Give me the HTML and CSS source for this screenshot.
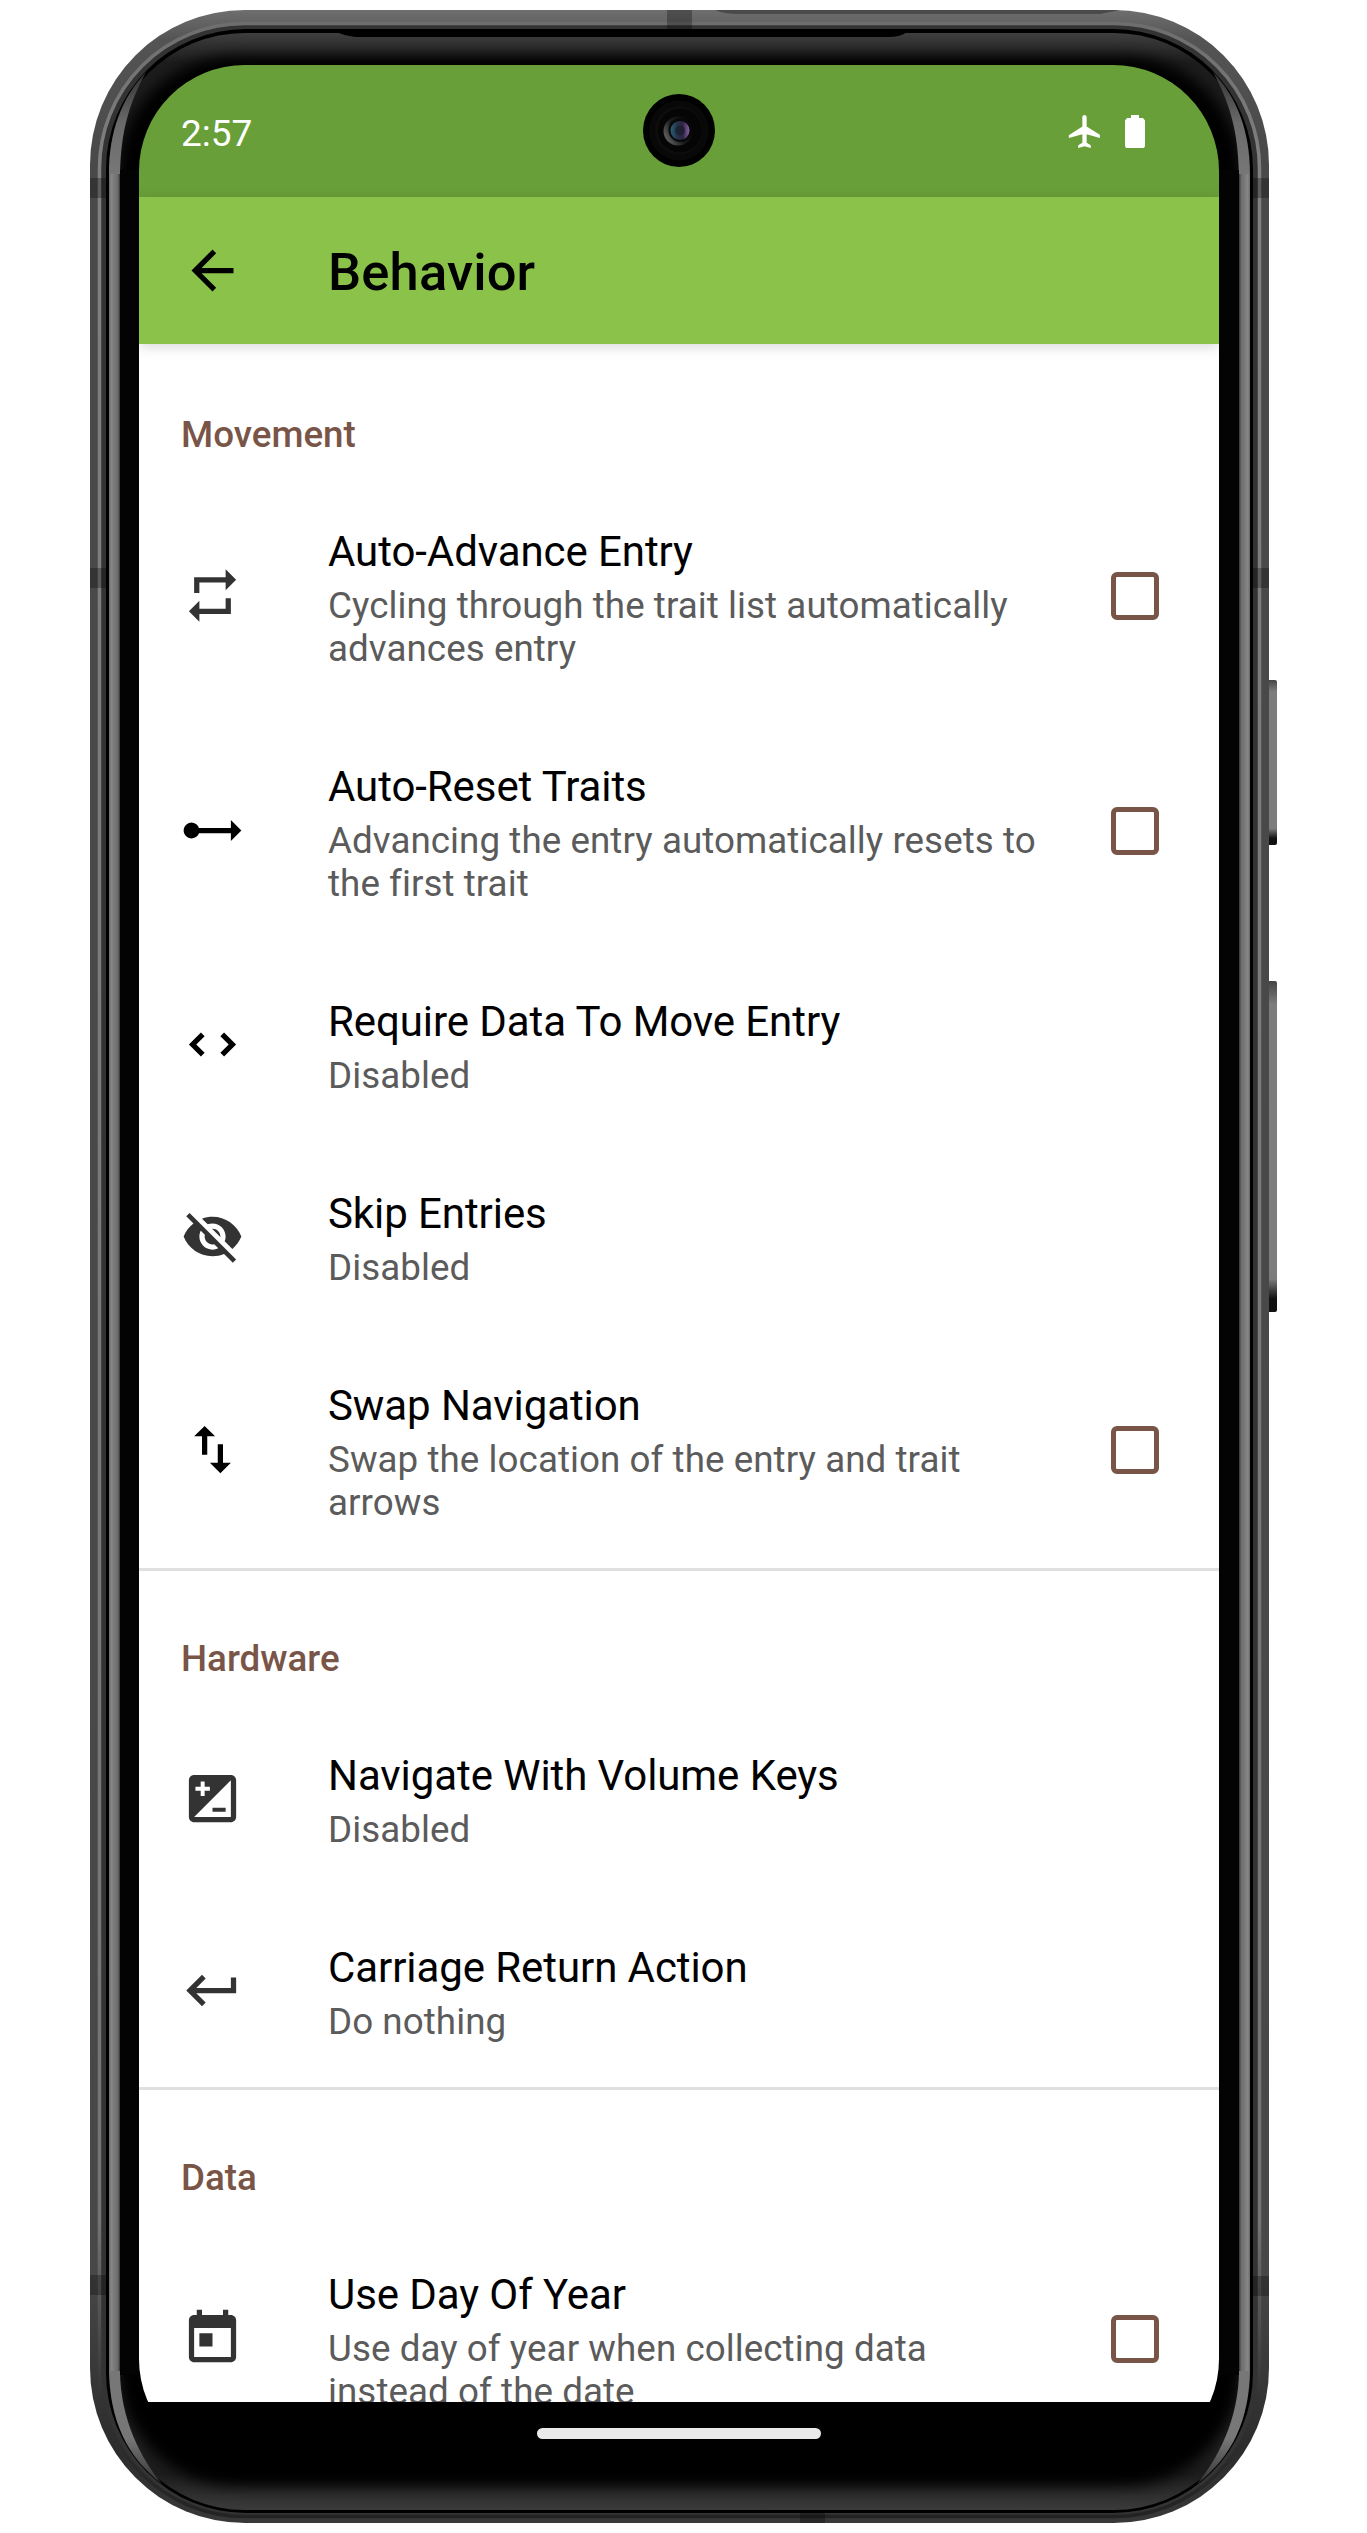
FILE: index.html
```
<!DOCTYPE html>
<html lang="en">
<head>
<meta charset="utf-8">
<title>Behavior</title>
<link rel="stylesheet" href="styles.css">
</head>
<body>
<div class="device">
  <svg class="shell" viewBox="0 0 1367 2533" aria-hidden="true">
    <defs>
      <linearGradient id="rail" gradientUnits="userSpaceOnUse" x1="0" y1="10" x2="0" y2="2523">
        <stop offset="0" stop-color="#6e6e6e"/><stop offset=".012" stop-color="#545454"/><stop offset=".06" stop-color="#494949"/>
        <stop offset=".9" stop-color="#484848"/><stop offset=".97" stop-color="#2c2c2c"/><stop offset="1" stop-color="#383838"/>
      </linearGradient>
      <linearGradient id="shine" gradientUnits="userSpaceOnUse" x1="0" y1="10" x2="0" y2="2523">
        <stop offset="0" stop-color="#6c6c6c"/><stop offset=".06" stop-color="#808080"/>
        <stop offset=".88" stop-color="#747474"/><stop offset=".95" stop-color="#333"/><stop offset="1" stop-color="#222"/>
      </linearGradient>
      <linearGradient id="glass" gradientUnits="userSpaceOnUse" x1="0" y1="33" x2="0" y2="2511">
        <stop offset="0" stop-color="#3e3e3e"/><stop offset=".012" stop-color="#1c1c1c"/><stop offset=".03" stop-color="#1c1c1c"/>
        <stop offset=".97" stop-color="#222"/><stop offset=".985" stop-color="#1c1c1c"/><stop offset="1" stop-color="#3c3c3c"/>
      </linearGradient>
      <linearGradient id="edge"><stop offset="0" stop-color="#6a6a6a"/><stop offset=".2" stop-color="#868686"/><stop offset=".8" stop-color="#6c6c6c"/><stop offset="1" stop-color="#333"/></linearGradient>
      <linearGradient id="fadeTop" x1="0" y1="0" x2="0" y2="1"><stop offset="0" stop-color="#333"/><stop offset=".5" stop-color="#6a6a6a"/><stop offset="1" stop-color="#777"/></linearGradient>
      <linearGradient id="fadeBottom" x1="0" y1="0" x2="0" y2="1"><stop offset="0" stop-color="#777"/><stop offset=".6" stop-color="#777"/><stop offset="1" stop-color="#333"/></linearGradient>
      <linearGradient id="key" x1="0" y1="0" x2="0" y2="1"><stop offset="0" stop-color="#444"/><stop offset=".07" stop-color="#7c7c7c"/><stop offset=".9" stop-color="#7c7c7c"/><stop offset=".96" stop-color="#111"/><stop offset="1" stop-color="#111"/></linearGradient>
      <linearGradient id="iris"><stop offset="0" stop-color="#286075"/><stop offset=".35" stop-color="#253348"/><stop offset=".65" stop-color="#2c2444"/><stop offset="1" stop-color="#8d62a0"/></linearGradient>
      <linearGradient id="ring" x1="0" y1=".8" x2="1" y2=".2"><stop offset="0" stop-color="#6a6a6a"/><stop offset=".45" stop-color="#1c1c1c"/><stop offset="1" stop-color="#060606"/></linearGradient>
      <filter id="soft" x="-5%" y="-5%" width="110%" height="110%"><feGaussianBlur stdDeviation="7"/></filter>
      <clipPath id="face"><rect x="109" y="33" width="1141" height="2477" rx="136"/></clipPath>
      <g id="sideband">
        <path d="M146 72C122 98 109 130 109 175H120C121 130 129 104 146 72Z" fill="url(#fadeTop)"/>
        <path d="M109 2370C110 2420 126 2456 162 2484C142 2460 120 2420 120 2370Z" fill="url(#fadeBottom)"/>
        <rect x="109" y="174" width="11" height="2197" fill="url(#edge)"/>
      </g>
    </defs>
    <rect x="1266" y="680" width="11" height="165" rx="2" fill="url(#key)"/>
    <rect x="1266" y="981" width="11" height="331" rx="2" fill="url(#key)"/>
    <rect x="90" y="10" width="1179" height="2513" rx="155" fill="url(#rail)"/>
    <path d="M715 10H1120L1100 14H738Q724 14 715 10Z" fill="#4a4a4a"/>
    <rect x="99.500" y="23.500" width="1160" height="2493" rx="145" fill="#333" stroke="url(#shine)" stroke-width="3.500"/>
    <path fill="#000" fill-opacity=".28" d="M90 178h16v20H90zM90 568h16v20H90zM90 2275h16v20H90zM1253 178h16v20h-16zM1253 568h16v20h-16zM1253 2276h16v20h-16zM667 10h25v20h-25zM800 2513h25v10h-25z"/>
    <rect x="106" y="29" width="1147" height="2484" rx="140" fill="#000"/>
    <rect x="109" y="33" width="1141" height="2477" rx="136" fill="url(#glass)"/>
    <path d="M336 32H907Q901 37 888 37H355Q345 36 336 32Z" fill="#000"/>
    <g clip-path="url(#face)"><rect x="118" y="56" width="1123" height="2430" rx="118" fill="#000" filter="url(#soft)"/></g>
    <use href="#sideband"/>
    <use href="#sideband" transform="matrix(-1 0 0 1 1359 0)"/>
    <rect x="120" y="170" width="1119" height="2205" fill="#030303"/>
  </svg>

  <main class="screen">
    <header class="status">
      <span class="clock">2:57</span>
      <span class="indicators">
        <svg class="plane" viewBox="2 2 20 20"><path d="M21.300 15.300V14L13.300 9V3.400C13.300 1.600 10.700 1.600 10.700 3.400V9L2.500 14.200V16L10.700 13.600V18.800L8.200 20.300V22L12 21L15.800 22V20.300L13.300 18.800V13.600L21.300 16Z"/></svg>
        <svg class="battery" viewBox="0 0 20 33"><path d="M6 0h8v3h4l2 2.500V31l-1 2H1l-1-2V5.500L2 3h4z"/></svg>
      </span>
      <svg class="camera" viewBox="0 0 72 73">
        <ellipse cx="36" cy="36.500" rx="36" ry="36.500" fill="#010101"/>
        <circle cx="36" cy="36.500" r="30" fill="#080808"/>
        <circle cx="36" cy="36.500" r="24" fill="#0d0d0d"/>
        <circle cx="37" cy="36.500" r="22" fill="#050505"/>
        <circle cx="35" cy="37" r="14.500" fill="url(#ring)"/>
        <circle cx="37.500" cy="36" r="12" fill="#08080a"/>
        <circle cx="37" cy="36.500" r="9.500" fill="url(#iris)"/>
        <circle cx="37" cy="36.500" r="5" fill="#161a28" fill-opacity=".6"/>
      </svg>
    </header>

    <nav class="toolbar">
      <svg class="icon" viewBox="0 0 24 24"><path d="M20 11H7.830l5.590-5.590L12 4l-8 8 8 8 1.410-1.410L7.830 13H20v-2z"/></svg>
      <h1 class="title">Behavior</h1>
    </nav>

    <div class="settings">
      <section class="group">
        <h2 class="category">Movement</h2>
        <div class="row">
          <svg class="icon muted" viewBox="0 0 24 24"><path d="M7 7h10v3l4-4-4-4v3H5v6h2V7zm10 10H7v-3l-4 4 4 4v-3h12v-6h-2v4z"/></svg>
          <div class="text"><div class="name">Auto-Advance Entry</div><div class="summary">Cycling through the trait list automatically<br>advances entry</div></div>
          <span class="checkbox"></span>
        </div>
        <div class="row">
          <svg class="icon" viewBox="0 0 24 24"><path d="M23 12l-4-4v3H6.830A3 3 0 1 0 6.830 13H19v3l4-4z"/></svg>
          <div class="text"><div class="name">Auto-Reset Traits</div><div class="summary">Advancing the entry automatically resets to<br>the first trait</div></div>
          <span class="checkbox"></span>
        </div>
        <div class="row">
          <svg class="icon" viewBox="0 0 24 24"><path transform="rotate(90 12 12)" d="M12 5.830L15.170 9l1.410-1.410L12 3 7.410 7.590 8.830 9 12 5.830zm0 12.340L8.830 15l-1.410 1.410L12 21l4.590-4.590L15.170 15 12 18.170z"/></svg>
          <div class="text"><div class="name">Require Data To Move Entry</div><div class="summary">Disabled</div></div>
        </div>
        <div class="row">
          <svg class="icon muted" viewBox="0 0 24 24"><path d="M12 7c2.760 0 5 2.240 5 5 0 .65-.13 1.260-.36 1.830l2.920 2.920c1.510-1.260 2.700-2.890 3.430-4.750-1.730-4.390-6-7.500-11-7.500-1.400 0-2.740.25-3.980.7l2.160 2.160C10.740 7.130 11.350 7 12 7zM2 4.270l2.280 2.280.46.46C3.080 8.300 1.780 10.020 1 12c1.730 4.390 6 7.500 11 7.500 1.550 0 3.030-.3 4.380-.84l.42.42L19.730 22 21 20.730 3.270 3 2 4.270zM7.530 9.800l1.550 1.550c-.05.21-.08.43-.08.65 0 1.660 1.340 3 3 3 .22 0 .44-.03.65-.08l1.550 1.550c-.67.33-1.410.53-2.200.53-2.760 0-5-2.240-5-5 0-.79.2-1.530.53-2.200zm4.310-.78l3.150 3.150.02-.16c0-1.660-1.340-3-3-3l-.17.01z"/></svg>
          <div class="text"><div class="name">Skip Entries</div><div class="summary">Disabled</div></div>
        </div>
        <div class="row">
          <svg class="icon" viewBox="0 0 24 24"><path d="M16 17.010V10h-2v7.010h-3L15 21l4-3.990h-3zM9 3L5 6.990h3V14h2V6.990h3L9 3z"/></svg>
          <div class="text"><div class="name">Swap Navigation</div><div class="summary">Swap the location of the entry and trait<br>arrows</div></div>
          <span class="checkbox"></span>
        </div>
      </section>

      <section class="group divided">
        <h2 class="category">Hardware</h2>
        <div class="row">
          <svg class="icon muted" viewBox="0 0 24 24"><path d="M19 3H5c-1.100 0-2 .9-2 2v14c0 1.100.9 2 2 2h14c1.100 0 2-.9 2-2V5c0-1.100-.9-2-2-2zM5.500 7.500h2v-2H9v2h2V9H9v2H7.500V9h-2V7.500zM19 19H5L19 5v14zm-2-2v-1.500h-5V17h5z"/></svg>
          <div class="text"><div class="name">Navigate With Volume Keys</div><div class="summary">Disabled</div></div>
        </div>
        <div class="row">
          <svg class="icon muted" viewBox="0 0 24 24"><path d="M19 7v4H5.830l3.580-3.590L8 6l-6 6 6 6 1.410-1.410L5.830 13H21V7z"/></svg>
          <div class="text"><div class="name">Carriage Return Action</div><div class="summary">Do nothing</div></div>
        </div>
      </section>

      <section class="group divided">
        <h2 class="category">Data</h2>
        <div class="row">
          <svg class="icon muted" viewBox="0 0 24 24"><path d="M19 3h-1V1h-2v2H8V1H6v2H5c-1.110 0-1.990.9-1.990 2L3 19c0 1.100.89 2 2 2h14c1.100 0 2-.9 2-2V5c0-1.100-.9-2-2-2zm0 16H5V8h14v11zM7 10h5v5H7z"/></svg>
          <div class="text"><div class="name">Use Day Of Year</div><div class="summary">Use day of year when collecting data<br>instead of the date</div></div>
          <span class="checkbox"></span>
        </div>
      </section>
    </div>

    <footer class="gesture"><span class="pill"></span></footer>
  </main>
</div>
</body>
</html>
```
FILE: styles.css
```
* { box-sizing: border-box; }

body {
  margin: 0;
  background: #fff;
  font-family: Roboto, "Liberation Sans", sans-serif;
  color: #000;
}

.device {
  position: relative;
  width: 1367px;
  height: 2533px;
  padding: 65px 148px 68px 139px;
  overflow: hidden;
}

.shell {
  position: absolute;
  inset: 0;
  width: 1367px;
  height: 2533px;
}

.screen {
  position: relative;
  display: flex;
  flex-direction: column;
  width: 1080px;
  height: 2400px;
  border-radius: 106px;
  overflow: hidden;
}

.status {
  position: relative;
  flex: none;
  display: flex;
  justify-content: space-between;
  align-items: center;
  height: 132px;
  padding: 5px 74px 0 42px;
  background: #689f38;
  color: #fff;
}

.clock { font-size: 37px; line-height: 44px; }

.indicators {
  display: flex;
  align-items: center;
  gap: 24px;
  margin-top: -5px;
}
.indicators svg { display: block; fill: #fff; }
.plane { width: 33px; height: 33px; }
.battery { width: 20px; height: 33px; }

.camera {
  position: absolute;
  left: 504px;
  top: 29px;
  width: 72px;
  height: 73px;
}

.toolbar {
  position: relative;
  z-index: 1;
  flex: none;
  display: flex;
  align-items: center;
  gap: 84px;
  height: 147px;
  padding-left: 42px;
  background: #8bc34a;
  box-shadow: 0 3px 12px rgba(0, 0, 0, .15);
}

.title {
  margin: 3px 0 0;
  font-size: 52.500px;
  line-height: 62px;
  font-weight: 500;
  letter-spacing: .15px;
}

.icon { flex: none; display: block; width: 63px; height: 63px; fill: #000; }
.muted { fill: #333; }

.settings {
  flex: 1;
  min-height: 0;
  overflow: hidden;
  background: #fff;
}

.category {
  height: 135px;
  margin: 0;
  padding: 69px 42px 0;
  font-size: 36.750px;
  line-height: 43px;
  font-weight: 500;
  color: #795548;
}
.divided { box-shadow: inset 0 3px #e0e0e0; }

.row {
  display: flex;
  align-items: center;
  padding: 0 60px 0 42px;
}
.row .icon,
.checkbox { margin-bottom: 2px; }

.text {
  flex: 1;
  display: flex;
  flex-direction: column;
  gap: 7px;
  margin-left: 84px;
  padding: 48px 0 44px;
  white-space: nowrap;
}
.name { font-size: 42px; line-height: 50px; letter-spacing: -.08px; }
.summary { font-size: 36.750px; line-height: 43px; letter-spacing: .06px; color: #5b5b5b; }

.checkbox {
  flex: none;
  width: 48px;
  height: 48px;
  border: 5px solid #795548;
  border-radius: 6px;
}

.gesture {
  flex: none;
  display: flex;
  align-items: center;
  justify-content: center;
  height: 63px;
  background: #000;
}
.pill { width: 284px; height: 11px; border-radius: 6px; background: #eaeaea; }
```
